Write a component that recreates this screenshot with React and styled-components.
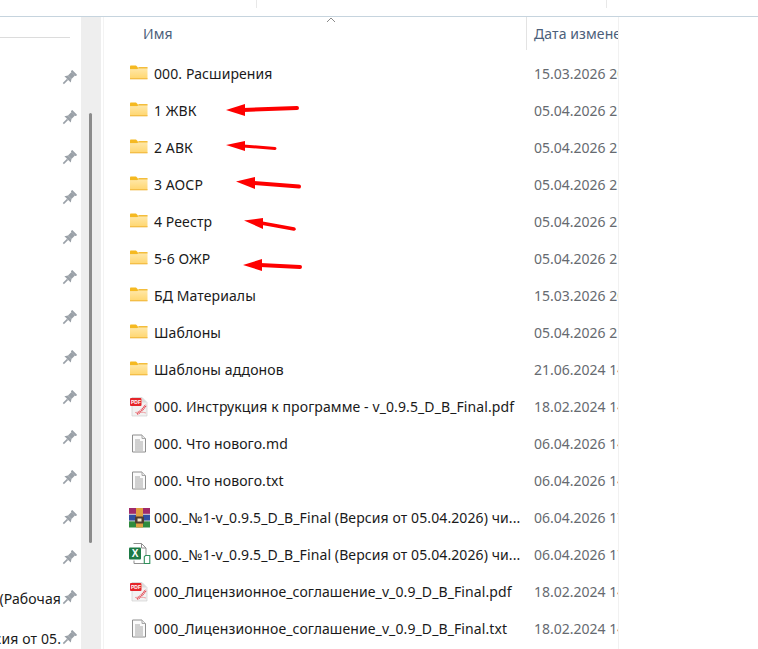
import styled, { createGlobalStyle } from "styled-components";

const GlobalStyle = createGlobalStyle`
  html, body {
    margin: 0;
    padding: 0;
    background: #fff;
  }
  body {
    font-family: "Noto Sans", "Open Sans", sans-serif;
    font-size: 14px;
    letter-spacing: 0.1px;
    color: #1a1a1a;
  }
`;

const Page = styled.div`
  position: relative;
  width: 758px;
  height: 649px;
  overflow: hidden;
  background: #fff;
`;

const TopStrip = styled.div`
  display: flex;
  height: 16px;
  border-bottom: 1px solid #c6d4de;
`;

const TopSegment = styled.div`
  width: ${(p) => p.$width}px;
  height: 8px;
  border-right: 1px solid #e8e8e8;
`;

const Body = styled.div`
  display: flex;
  height: 632px;
`;

const Sidebar = styled.aside`
  width: 81px;
  flex-shrink: 0;
  overflow: hidden;
`;

const SidebarRule = styled.div`
  width: 70px;
  height: 20px;
  border-bottom: 1px solid #dcdcdc;
  margin-bottom: 20px;
`;

const PinRow = styled.div`
  display: flex;
  align-items: center;
  justify-content: flex-end;
  height: 40px;
  padding-right: 4px;
  white-space: nowrap;
`;

const PinLabel = styled.span`
  flex-shrink: 0;
  color: #1a1a1a;
`;

const PinIcon = styled.svg`
  width: 16px;
  height: 16px;
  flex-shrink: 0;
`;

const ScrollTrack = styled.div`
  display: flex;
  justify-content: center;
  width: 20px;
  flex-shrink: 0;
  padding: 96px 1px 0 0;
  box-sizing: border-box;
  background: #eeeeee;
`;

const ScrollThumb = styled.div`
  width: 3px;
  height: 430px;
  border-radius: 2px;
  background: #8b8b8b;
`;

const Main = styled.main`
  width: 514px;
  margin-left: 2px;
  flex-shrink: 0;
  overflow: hidden;
  border-left: 1px solid #f3f3f3;
  border-right: 1px solid #f1f1f1;
`;

const Header = styled.div`
  position: relative;
  display: flex;
  height: 33px;
  margin-bottom: 5px;
  color: #4c607a;
`;

const SortCaret = styled.svg`
  position: absolute;
  left: 222px;
  top: 0;
  width: 10px;
  height: 6px;
`;

const NameHeader = styled.div`
  width: 422px;
  padding-left: 39px;
  box-sizing: border-box;
  line-height: 33px;
`;

const DateHeader = styled.div`
  flex: 1;
  padding-left: 7px;
  line-height: 33px;
  white-space: nowrap;
  overflow: hidden;
  border-left: 1px solid #e3e3e3;
`;

const Row = styled.div`
  display: flex;
  align-items: center;
  height: 37px;
`;

const NameCell = styled.div`
  display: flex;
  align-items: center;
  width: 423px;
  padding-left: 25px;
  box-sizing: border-box;
  flex-shrink: 0;
`;

const IconBox = styled.svg`
  width: 21px;
  height: 20px;
  margin-right: 4px;
  flex-shrink: 0;
  overflow: visible;
`;

const Name = styled.span`
  white-space: nowrap;
  color: #1a1a1a;
`;

const DateCell = styled.div`
  flex: 1;
  padding-left: 7px;
  white-space: nowrap;
  overflow: hidden;
  letter-spacing: 0;
  color: #666a70;
`;

const ArrowLayer = styled.svg`
  position: absolute;
  left: 0;
  top: 0;
  width: 758px;
  height: 649px;
  pointer-events: none;
`;

const FolderIcon = () => (
  <IconBox viewBox="0 1 21 20">
    <defs>
      <linearGradient id="folderFill" x1="0" y1="0" x2="0" y2="1">
        <stop offset="0" stopColor="#ffe9ad" />
        <stop offset="1" stopColor="#ffd66e" />
      </linearGradient>
    </defs>
    <path d="M1 3.5C1 3 1.4 2.5 2 2.5h5l2 2v2H1z" fill="#f5b921" />
    <path d="M1 6.5h7l2-2h8.5v11.5H1z" fill="url(#folderFill)" />
    <path d="M8 5.5l2-1.5h8.5v1.5H10z" fill="#f3bd3c" />
    <rect x="1" y="15.3" width="17.5" height="1" fill="#efb437" />
  </IconBox>
);

const PdfIcon = () => (
  <IconBox viewBox="0 0 21 20">
    <path d="M3 .5h10l5 5V19H3z" fill="#f2f2f2" stroke="#d0d0d0" strokeWidth=".7" />
    <path d="M13 .5l5 5h-5z" fill="#dcdcdc" />
    <rect x="1" y="1" width="11.5" height="8" rx="1" fill="#e5252a" />
    <text x="2" y="7" fontSize="5" fontWeight="700" fontFamily="Liberation Sans" letterSpacing="0" fill="#fff">PDF</text>
    <path d="M8 17c3-2 6-5 9-9" fill="none" stroke="#e5505a" strokeWidth="2.4" strokeDasharray="1.2 .6" />
    <path d="M6 15.5c4-.5 8-.5 11 .5" fill="none" stroke="#ec8d92" strokeWidth=".8" />
  </IconBox>
);

const TextIcon = () => (
  <IconBox viewBox="0 0 21 20">
    <path d="M3.5 1h9.5l3.5 3.5V18H3.5z" fill="#fbfbfb" stroke="#8e8e8e" />
    <path d="M13 1v3.5h3.5" fill="#ececec" stroke="#a8a8a8" />
    <path d="M6 6h5M6 8h8M6 10h8M6 12h8M6 14h8M6 16h8" stroke="#9c9c9c" strokeWidth=".9" />
  </IconBox>
);

const RarIcon = () => (
  <IconBox viewBox="0 0 21 20">
    <rect x="0" y="0" width="21" height="6.5" fill="#a02a6a" />
    <rect x="0" y="6.5" width="21" height="6.5" fill="#2f4fa3" />
    <rect x="0" y="13" width="21" height="6.5" fill="#2e8b3d" />
    <rect x="0" y="5.8" width="21" height=".9" fill="#d9d9d9" />
    <rect x="0" y="12.5" width="21" height=".9" fill="#d9d9d9" />
    <rect x="7" y="0" width="7" height="19.5" fill="#e0a040" />
    <rect x="6" y="8.5" width="9" height="7" rx="1" fill="#4f3c30" />
    <rect x="8.5" y="10.5" width="4" height="3" fill="#f1e6c8" />
  </IconBox>
);

const ExcelIcon = () => (
  <IconBox viewBox="0 0 21 20">
    <path d="M4.5 -1.5h8l4.5 4.5V10.5" fill="#fff" stroke="#8f8f8f" />
    <path d="M12.5 -1.5V3H17" fill="none" stroke="#8f8f8f" />
    <path d="M5 15.5v3h10" fill="none" stroke="#8f8f8f" />
    <rect x="0" y="2.5" width="12" height="12" rx="1" fill="#1d7a45" />
    <text x="2.7" y="12" fontSize="10" fontWeight="700" fontFamily="Liberation Sans" letterSpacing="0" fill="#fff">X</text>
    <path d="M16.5 10.5h4.300v8h-5.500v-6.800z" fill="#fff" stroke="#2f8f5b" strokeWidth="1.1" />
  </IconBox>
);

const icons = {
  folder: FolderIcon,
  pdf: PdfIcon,
  text: TextIcon,
  rar: RarIcon,
  excel: ExcelIcon,
};

const files = [
  { kind: "folder", name: "000. Расширения", date: "15.03.2026 20:14" },
  { kind: "folder", name: "1 ЖВК", date: "05.04.2026 21:02" },
  { kind: "folder", name: "2 АВК", date: "05.04.2026 21:02" },
  { kind: "folder", name: "3 АОСР", date: "05.04.2026 21:02" },
  { kind: "folder", name: "4 Реестр", date: "05.04.2026 21:02" },
  { kind: "folder", name: "5-6 ОЖР", date: "05.04.2026 21:02" },
  { kind: "folder", name: "БД Материалы", date: "15.03.2026 20:14" },
  { kind: "folder", name: "Шаблоны", date: "05.04.2026 21:02" },
  { kind: "folder", name: "Шаблоны аддонов", date: "21.06.2024 14:10" },
  { kind: "pdf", name: "000. Инструкция к программе - v_0.9.5_D_B_Final.pdf", date: "18.02.2024 14:10" },
  { kind: "text", name: "000. Что нового.md", date: "06.04.2026 14:10" },
  { kind: "text", name: "000. Что нового.txt", date: "06.04.2026 14:10" },
  { kind: "rar", name: "000._№1-v_0.9.5_D_B_Final (Версия от 05.04.2026) чи...", date: "06.04.2026 17:10" },
  { kind: "excel", name: "000._№1-v_0.9.5_D_B_Final (Версия от 05.04.2026) чи...", date: "06.04.2026 17:10" },
  { kind: "pdf", name: "000_Лицензионное_соглашение_v_0.9_D_B_Final.pdf", date: "18.02.2024 14:10" },
  { kind: "text", name: "000_Лицензионное_соглашение_v_0.9_D_B_Final.txt", date: "18.02.2024 14:10" },
];

const pinLabels = ["", "", "", "", "", "", "", "", "", "", "", "", "", "(Рабочая", "сия от 05."];

// tip, two head corners, end of the shaft
const arrows = [
  { head: "226,110 245,104 245,116", shaft: [243, 110, 297, 108], width: 4 },
  { head: "226,145 245,141 245,151", shaft: [243, 146, 275, 148.5], width: 3 },
  { head: "236,181.5 255,177 255,189", shaft: [253, 183, 299, 186.5], width: 4 },
  { head: "244,220.5 263,218 263,229", shaft: [261, 223, 294, 229], width: 3.5 },
  { head: "243,265 262,259 262,271", shaft: [260, 265, 300, 267], width: 4 },
];

const Pin = () => (
  <PinIcon viewBox="0 0 16 16">
    <g transform="rotate(45 8 8)" fill="#9aa1a8">
      <rect x="4.5" y="0" width="7" height="2" rx=".5" />
      <rect x="5.5" y="2" width="5" height="5" />
      <path d="M5.5 7h5l2 3h-9z" />
      <rect x="7.2" y="10" width="1.6" height="6" />
    </g>
  </PinIcon>
);

export default function App() {
  return (
    <Page>
      <GlobalStyle />
      <TopStrip>
        <TopSegment $width={256} />
        <TopSegment $width={349} />
      </TopStrip>
      <Body>
        <Sidebar>
          <SidebarRule />
          {pinLabels.map((label, i) => (
            <PinRow key={i}>
              {label && <PinLabel>{label}</PinLabel>}
              <Pin />
            </PinRow>
          ))}
        </Sidebar>
        <ScrollTrack>
          <ScrollThumb />
        </ScrollTrack>
        <Main>
          <Header>
            <SortCaret viewBox="0 0 10 6">
              <path d="M1 5l4-4 4 4" fill="none" stroke="#8a8a8a" />
            </SortCaret>
            <NameHeader>Имя</NameHeader>
            <DateHeader>Дата изменения</DateHeader>
          </Header>
          {files.map((file, i) => {
            const Icon = icons[file.kind];
            return (
              <Row key={i}>
                <NameCell>
                  <Icon />
                  <Name>{file.name}</Name>
                </NameCell>
                <DateCell>{file.date}</DateCell>
              </Row>
            );
          })}
        </Main>
      </Body>
      <ArrowLayer viewBox="0 0 758 649">
        {arrows.map((arrow, i) => (
          <g key={i}>
            <polygon points={arrow.head} fill="#fe0000" />
            <line
              x1={arrow.shaft[0]}
              y1={arrow.shaft[1]}
              x2={arrow.shaft[2]}
              y2={arrow.shaft[3]}
              stroke="#fe0000"
              strokeWidth={arrow.width}
              strokeLinecap="round"
            />
          </g>
        ))}
      </ArrowLayer>
    </Page>
  );
}
